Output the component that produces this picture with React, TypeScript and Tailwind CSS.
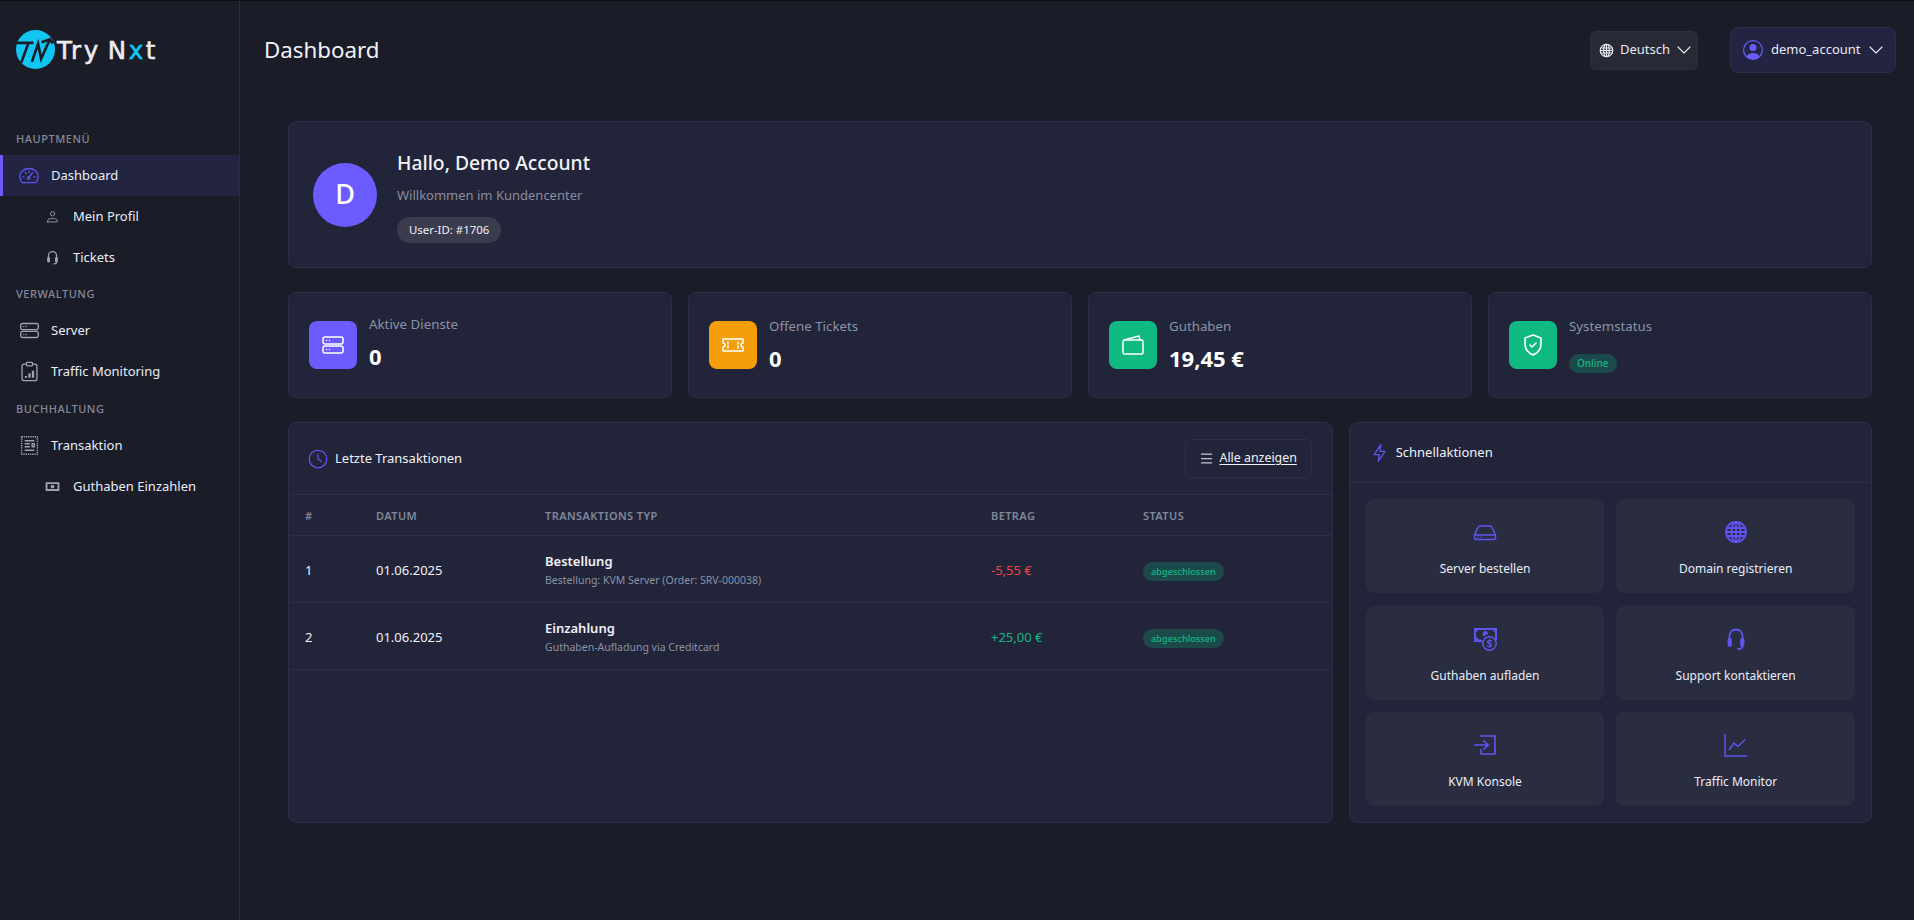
import { ChevronDown, Menu } from "lucide-react";
import type { ReactNode } from "react";

const Ico = ({ size = 20, sw = 1.5, className = "", children }: { size?: number; sw?: number; className?: string; children: ReactNode }) => (
  <svg width={size} height={size} viewBox="0 0 24 24" fill="none" stroke="currentColor" strokeWidth={sw} strokeLinecap="round" strokeLinejoin="round" className={`shrink-0 ${className}`}>
    {children}
  </svg>
);

const GaugeIcon = () => (
  <Ico size={20} sw={1.6}>
    <path d="M4 20h16c2-1.800 3-4.500 3-7.500C23 7 18 3 12 3S1 7 1 12.500c0 3 1 5.700 3 7.500Z" />
    <path d="m11.500 14 5-6M4.500 13h1.500M18 13h1.500M7.500 7.500l1 1.200M12 6v1.500" />
    <circle cx="11.500" cy="14.500" r="1.400" />
  </Ico>
);
const ServerIcon = ({ size = 21, sw = 1.6 }: { size?: number; sw?: number }) => (
  <Ico size={size} sw={sw}>
    <rect x="2" y="4" width="20" height="7" rx="2" />
    <rect x="2" y="13" width="20" height="7" rx="2" />
    <path d="M5.500 7.500h.01M8.500 7.500h.01M5.500 16.500h.01M8.500 16.500h.01" />
  </Ico>
);
const ClipboardIcon = () => (
  <Ico size={21} sw={1.5}>
    <rect x="3.500" y="3.500" width="17" height="19" rx="2.500" />
    <rect x="8.500" y="1.500" width="7" height="4" rx="1" fill="#1a1c28" />
    <path d="M8 19v-2M12 19v-5M16 19v-8" strokeWidth={2.6} strokeLinecap="butt" />
  </Ico>
);
const ReceiptIcon = () => (
  <Ico size={21} sw={1.6}>
    <path d="M3 2h18v20H3z" strokeDasharray="1.500 1" strokeLinecap="butt" />
    <path d="M6.500 6.500h11M6.500 10h6M6.500 13.500h6M6.500 17.500h11M15 10h2.500v3.500H15z" strokeLinecap="butt" />
  </Ico>
);
const CashIcon = () => (
  <svg width={15} height={15} viewBox="0 0 24 24" fill="currentColor">
    <path fillRule="evenodd" d="M1 5h22v14H1V5Zm3 3v8h16V8H4Zm8 1a3 3 0 1 1 0 6 3 3 0 0 1 0-6Z" />
  </svg>
);
const UserIcon = () => (
  <Ico size={13} sw={1.6}>
    <circle cx="12" cy="7" r="4" />
    <path d="M3 22v-2c0-3 3.500-4.500 9-4.500s9 1.500 9 4.500v2H3Z" />
  </Ico>
);
const HeadsetIcon = ({ size = 15, sw = 2 }: { size?: number; sw?: number }) => (
  <Ico size={size} sw={sw}>
    <path d="M5.500 13V9a6.500 6.500 0 0 1 13 0v4" />
    <rect x="4.500" y="12" width="2.500" height="7" rx="1.200" fill="currentColor" />
    <rect x="17" y="12" width="2.500" height="7" rx="1.200" fill="currentColor" />
    <path d="M18.500 19c0 2-1.500 3-4.500 3" />
  </Ico>
);
const GlobeIcon = ({ size = 15 }: { size?: number }) => (
  <Ico size={size} sw={1.9}>
    <circle cx="12" cy="12" r="10" />
    <ellipse cx="12" cy="12" rx="4.500" ry="10" />
    <path d="M12 2v20M2.500 8h19M2 12h20M2.500 16h19" strokeLinecap="butt" />
  </Ico>
);

const MenuItem = ({ icon, label, active, sub }: { icon: ReactNode; label: string; active?: boolean; sub?: boolean }) => (
  <div className={`flex h-[41px] items-center border-l-[3px] text-[13px] text-[#e8eef8] ${active ? "border-[#6c5cff] bg-[#232441]" : "border-transparent"} ${sub ? "pl-[41px]" : "pl-[17px]"}`}>
    <span className={`flex shrink-0 justify-center ${active ? "text-[#5f54f0]" : "text-[#9aa3b5]"} ${sub ? "w-[16px]" : "w-[18px]"}`}>{icon}</span>
    <span className="ml-[13px] pt-[1px]">{label}</span>
  </div>
);

const SectionLabel = ({ children }: { children: ReactNode }) => (
  <div className="pl-4 text-[11px] font-medium leading-4 tracking-[0.55px] text-[#858998]">{children}</div>
);

const Sidebar = () => (
  <aside className="flex w-[240px] shrink-0 flex-col border-r border-[#2a2c42] bg-[#1a1c28]">
    <div className="flex h-[130px] items-start pl-4 pt-[29px]">
      <svg width="39" height="39" viewBox="0 0 38 38" className="shrink-0">
        <circle cx="19" cy="19" r="19" fill="#12c6f3" />
        <g stroke="#1a1c28" strokeWidth="2.600" fill="none" strokeLinejoin="miter">
          <path d="M0 12.500h17M12 13 5 32" />
          <path d="M15.500 31 21.500 13.500 24.500 28 33 9" />
          <path d="M25 12 33 9l3 4" />
        </g>
      </svg>
      <div className="mt-[7px] ml-[2px] flex text-[24.500px] leading-7 tracking-[2.600px] text-[#ececec] [-webkit-text-stroke:0.6px] [font-family:'DejaVu_Sans',sans-serif]">
        <span>Try</span>
        <span className="ml-[7px]">N</span>
        <span className="text-[#12c6f3]">x</span>
        <span>t</span>
      </div>
    </div>
    <SectionLabel>HAUPTMENÜ</SectionLabel>
    <div className="mt-2">
      <MenuItem active icon={<GaugeIcon />} label="Dashboard" />
      <MenuItem sub icon={<UserIcon />} label="Mein Profil" />
      <MenuItem sub icon={<HeadsetIcon />} label="Tickets" />
    </div>
    <div className="mt-2"><SectionLabel>VERWALTUNG</SectionLabel></div>
    <div className="mt-2">
      <MenuItem icon={<ServerIcon />} label="Server" />
      <MenuItem icon={<ClipboardIcon />} label="Traffic Monitoring" />
    </div>
    <div className="mt-[9px]"><SectionLabel>BUCHHALTUNG</SectionLabel></div>
    <div className="mt-2">
      <MenuItem icon={<ReceiptIcon />} label="Transaktion" />
      <MenuItem sub icon={<CashIcon />} label="Guthaben Einzahlen" />
    </div>
  </aside>
);

const Header = () => (
  <header className="flex h-[100px] items-center justify-between pl-6 pr-[18px] pb-[2px]">
    <h1 className="text-[22.300px] font-normal text-[#f1f2f7]">Dashboard</h1>
    <div className="flex items-center gap-8">
      <button className="flex h-[39px] w-[108px] items-center rounded-md border border-[#2d2f45] bg-[#272a35] pl-[8px] text-[13px] text-[#e8eaf2]">
        <GlobeIcon />
        <span className="ml-[6px]">Deutsch</span>
        <ChevronDown size={24} strokeWidth={1.100} className="ml-[2px]" />
      </button>
      <button className="flex h-[46px] w-[166px] items-center rounded-lg border border-[#2d2f4a] bg-[#232441] pl-[12px] text-[13px] text-[#e8eaf2]">
        <svg width="20" height="20" viewBox="0 0 20 20" fill="#6c5cff">
          <path fillRule="evenodd" d="M10 0a10 10 0 1 1 0 20 10 10 0 0 1 0-20Zm0 1.300a8.700 8.700 0 0 0-6.200 14.800C5 14.200 7.200 13 10 13s5 1.200 6.200 3.100A8.700 8.700 0 0 0 10 1.300ZM10 4a3.500 3.500 0 1 1 0 7 3.500 3.500 0 0 1 0-7Z" />
        </svg>
        <span className="ml-2">demo_account</span>
        <ChevronDown size={24} strokeWidth={1.100} className="ml-[3px]" />
      </button>
    </div>
  </header>
);

const StatCard = ({ color, icon, label, children, textClass = "" }: { color: string; icon: ReactNode; label: string; children: ReactNode; textClass?: string }) => (
  <div className="flex h-[106px] flex-1 items-center rounded-lg border border-[#2d2f4a] bg-[#222439] pl-[20px]">
    <div className={`flex h-12 w-12 shrink-0 items-center justify-center rounded-lg text-white ${color}`}>{icon}</div>
    <div className={`ml-3 flex flex-col ${textClass}`}>
      <div className="text-[13.300px] leading-5 text-[#8a93a6]">{label}</div>
      {children}
    </div>
  </div>
);

const Panel = ({ className = "", children }: { className?: string; children: ReactNode }) => (
  <div className={`rounded-lg border border-[#2d2f4a] bg-[#222439] ${className}`}>{children}</div>
);

const rows = [
  { n: 1, title: "Bestellung", sub: "Bestellung: KVM Server (Order: SRV-000038)", amount: "-5,55 €", color: "text-[#f04545]" },
  { n: 2, title: "Einzahlung", sub: "Guthaben-Aufladung via Creditcard", amount: "+25,00 €", color: "text-[#10b981]" },
];

const Transactions = () => (
  <Panel className="flex-[2]">
    <div className="flex h-[72px] items-center justify-between border-b border-[#2d2f4a] pl-[19px] pr-[20px]">
      <div className="mt-[1px] flex items-center gap-[7px] text-[13px] text-[#f1f2f7]">
        <Ico size={20} sw={1.5} className="text-[#5f54f0]">
          <circle cx="12" cy="12" r="10.500" />
          <path d="M12 6v6l4 3" />
        </Ico>
        Letzte Transaktionen
      </div>
      <button className="flex h-[39px] w-[127px] items-center justify-center gap-[5px] rounded-md border border-[#2d2f4a] text-[12.400px] text-[#f1f2f7]">
        <Menu size={15} strokeWidth={2} className="text-[#c5c8d2]" />
        <span className="underline underline-offset-2">Alle anzeigen</span>
      </button>
    </div>
    <div className="grid grid-cols-[71px_169px_446px_152px_1fr] pl-4 text-[13px]">
      <div className="col-span-5 -ml-4 grid h-[41px] grid-cols-subgrid items-center border-b border-[#2d2f4a] pl-4 pt-[2px] text-[11px] font-semibold tracking-[0.4px] text-[#7f889c]">
        <div>#</div>
        <div>DATUM</div>
        <div>TRANSAKTIONS TYP</div>
        <div>BETRAG</div>
        <div>STATUS</div>
      </div>
      {rows.map((r) => (
        <div key={r.n} className="col-span-5 -ml-4 grid h-[67px] grid-cols-subgrid items-center border-b border-[#2d2f4a] pl-4 pt-[3px] text-[#f1f2f7]">
          <div>{r.n}</div>
          <div>01.06.2025</div>
          <div className="-mt-[3px]">
            <div className="text-[13px] font-semibold leading-5">{r.title}</div>
            <div className="mt-[1px] text-[10.500px] leading-4 text-[#8a93a6]">{r.sub}</div>
          </div>
          <div className={r.color}>{r.amount}</div>
          <div>
            <span className="inline-block rounded-full bg-[#1c4a4b] px-2 text-[9.200px] font-medium leading-[19px] text-[#10b981]">abgeschlossen</span>
          </div>
        </div>
      ))}
    </div>
  </Panel>
);

const Action = ({ icon, label }: { icon: ReactNode; label: string }) => (
  <div className="flex h-[94px] flex-col items-center rounded-lg bg-[#2a2c40] pt-[21px] text-[12px] text-[#e8eef8]">
    <div className="flex h-[24px] items-center text-[#5f54f0]">{icon}</div>
    <div className="mt-[15px] leading-5">{label}</div>
  </div>
);

const QuickActions = () => (
  <Panel className="flex-1">
    <div className="flex h-[60px] items-center gap-[6px] border-b border-[#2d2f4a] pl-[20px] text-[13px] text-[#f1f2f7]">
      <Ico size={20} sw={1.5} className="text-[#5f54f0]">
        <path d="M13 2 5 14h6l-1 8 8-12h-6l1-8Z" />
      </Ico>
      Schnellaktionen
    </div>
    <div className="grid grid-cols-2 gap-x-3 gap-y-[12.500px] px-4 pt-4">
      <Action
        label="Server bestellen"
        icon={
          <Ico size={24} sw={1.6}>
            <path d="M1.500 15 5 7.500C5.500 6.500 6 6 7 6h10c1 0 1.500.5 2 1.500l3.500 7.500M1.500 15v3a1.500 1.500 0 0 0 1.500 1.500h18a1.500 1.500 0 0 0 1.500-1.500v-3h-21Z" />
            <path d="M5 17.300h.01M8 17.300h.01" />
          </Ico>
        }
      />
      <Action label="Domain registrieren" icon={<GlobeIcon size={24} />} />
      <Action
        label="Guthaben aufladen"
        icon={
          <svg width="24" height="24" viewBox="0 0 24 24" fill="none">
            <path fillRule="evenodd" fill="currentColor" d="M1 1h23v12h-2V5a3 3 0 0 1-2-2H5a3 3 0 0 1-2 2v5a3 3 0 0 1 2 2l4 1v2H1V1Zm11 3a3 3 0 0 1 3 3c-2 .5-3 1-4 2.500A3 3 0 0 1 12 4Z" />
            <circle cx="16.500" cy="16.500" r="6.700" stroke="currentColor" strokeWidth="1.500" />
            <text x="16.500" y="20" textAnchor="middle" fontSize="10" fontWeight="700" fill="currentColor">$</text>
          </svg>
        }
      />
      <Action label="Support kontaktieren" icon={<HeadsetIcon size={24} sw={1.800} />} />
      <Action
        label="KVM Konsole"
        icon={
          <Ico size={24} sw={1.700}>
            <path d="M8 3h14v18H8v-4M2 12h13M11 8l4 4-4 4" strokeLinecap="square" strokeLinejoin="miter" />
          </Ico>
        }
      />
      <Action
        label="Traffic Monitor"
        icon={
          <Ico size={24} sw={1.400}>
            <path d="M1 1v22h22M5 17l5-7 4 3.500 7-7" strokeLinecap="butt" strokeLinejoin="miter" />
          </Ico>
        }
      />
    </div>
  </Panel>
);

export default function App() {
  return (
    <div className="flex h-[920px] w-full overflow-hidden border-t border-[#0c0d13] bg-[#1a1c28] font-['Noto_Sans',sans-serif]">
      <Sidebar />
      <main className="flex min-w-0 flex-1 flex-col">
        <Header />
        <div className="flex flex-col pl-[48px] pr-[42px] pt-[20px]">
          <Panel className="flex h-[147px] items-center pl-[24px]">
            <div className="flex h-16 w-16 items-center justify-center rounded-full bg-[#6c5cff] text-[27px] font-medium text-white">D</div>
            <div className="ml-[20px] mt-[2px]">
              <div className="text-[19.300px] font-medium leading-7 text-[#f1f2f7]">Hallo, Demo Account</div>
              <div className="mt-2 text-[13px] leading-5 text-[#8a8d9e]">Willkommen im Kundencenter</div>
              <div className="mt-3 w-fit rounded-full bg-[#3a3c4e] px-3 text-[11.400px] leading-[26px] text-[#f1f2f7]">User-ID: #1706</div>
            </div>
          </Panel>
          <div className="mt-6 flex gap-4">
            <StatCard textClass="-mt-[7px]" color="bg-[#6c5cff]" icon={<ServerIcon size={24} sw={1.5} />} label="Aktive Dienste">
              <div className="mt-[8px] text-[22px] font-bold leading-7 text-white">0</div>
            </StatCard>
            <StatCard textClass="-mt-[3px]" color="bg-[#f59e0b]" icon={<Ico size={24} sw={1.5}><path d="M2 6h20v4a2 2 0 0 0 0 4v4H2v-4a2 2 0 0 0 0-4V6Z" /><path d="M7 9v2M7 13v2M17 9v2M17 13v2" /></Ico>} label="Offene Tickets">
              <div className="mt-[8px] text-[22px] font-bold leading-7 text-white">0</div>
            </StatCard>
            <StatCard textClass="-mt-[3px]" color="bg-[#10b981]" icon={<Ico size={24} sw={1.5} className="text-white"><rect x="2" y="7" width="20" height="14" rx="1.500" /><path d="m3 7 15-4 1 4" /></Ico>} label="Guthaben">
              <div className="mt-[8px] text-[22px] font-bold leading-7 text-white">19,45 €</div>
            </StatCard>
            <StatCard textClass="-mt-[1px]" color="bg-[#10b981]" icon={<Ico size={24} sw={1.600}><path d="M12 2 4 5v6c0 5 3.500 9 8 11 4.500-2 8-6 8-11V5l-8-3Z" /><path d="m9 12 2 2 4-4" /></Ico>} label="Systemstatus">
              <span className="mt-[18px] w-fit rounded-full bg-[#1c4a4b] px-2 text-[10px] font-medium leading-[19px] text-[#10b981]">Online</span>
            </StatCard>
          </div>
          <div className="mt-6 flex h-[401px] gap-4">
            <Transactions />
            <QuickActions />
          </div>
        </div>
      </main>
    </div>
  );
}
